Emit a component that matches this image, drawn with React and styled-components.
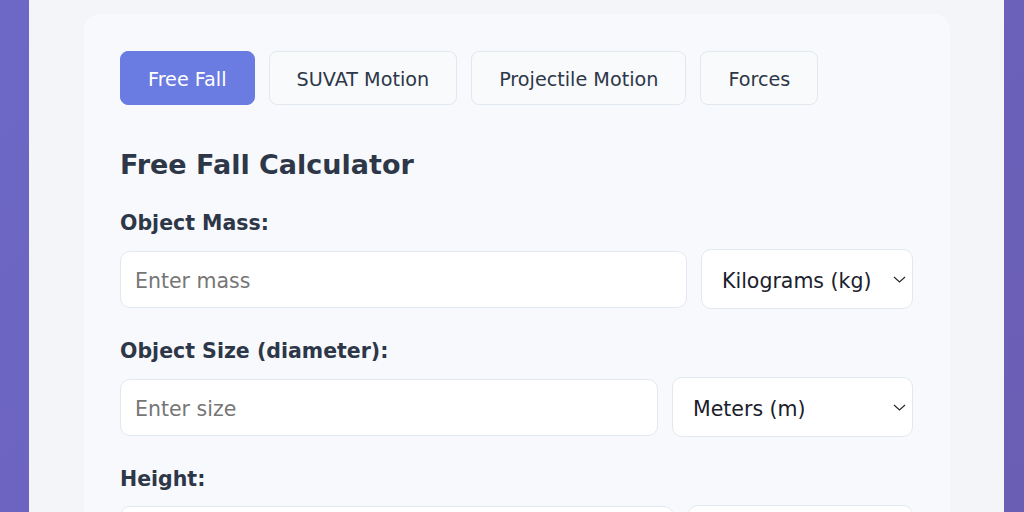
import React from 'react';
import styled, { createGlobalStyle } from 'styled-components';

const GlobalStyle = createGlobalStyle`
  html, body {
    margin: 0;
    height: 100%;
    overflow: hidden;
  }
  body {
    background: linear-gradient(135deg, #6d68c6 0%, #6a5db4 100%);
    font-family: "DejaVu Sans", Verdana, sans-serif;
    color: #2d3748;
  }
`;

const Page = styled.div`
  display: flex;
  padding: 0 20px 0 29px;
  min-height: 512px;
  box-sizing: border-box;
`;

const Container = styled.div`
  width: 975px;
  flex-shrink: 0;
  background: #f4f5f9;
  padding: 14px 54px 0 55px;
  box-sizing: border-box;
`;

const Card = styled.div`
  background: #f8f9fc;
  border-radius: 16px 16px 0 0;
  padding: 37px 37px 40px 36px;
`;

const Tabs = styled.div`
  display: flex;
  gap: 14px;
  margin-bottom: 44px;
`;

const Tab = styled.button`
  height: 54px;
  padding: 2px 27px 0;
  border-radius: 8px;
  border: 1.5px solid ${(p) => (p.active ? '#6a7ce2' : '#e2e8f0')};
  background: ${(p) => (p.active ? '#6a7ce2' : '#f9fafc')};
  color: ${(p) => (p.active ? '#ffffff' : '#2d3748')};
  font-family: inherit;
  font-size: 19.2px;
  cursor: pointer;
`;

const Title = styled.h2`
  margin: 0 0 30px;
  font-size: 27px;
  line-height: 1.2;
  font-weight: 700;
  color: #2d3748;
`;

const Group = styled.div`
  margin-bottom: 29.5px;
`;

const Label = styled.label`
  display: block;
  font-size: 20.5px;
  line-height: 1.2;
  font-weight: 700;
  color: #2d3748;
  margin-bottom: 13.5px;
`;

const Row = styled.div`
  display: flex;
  align-items: center;
  gap: 14px;
`;

const Input = styled.input`
  flex: 1;
  min-width: 0;
  height: 57px;
  box-sizing: border-box;
  padding: 3px 14px 0;
  border: 1.5px solid #e2e8f0;
  border-radius: 10px;
  background: #ffffff;
  font-family: inherit;
  font-size: 20.5px;
  color: #1a202c;
  outline: none;

  &::placeholder {
    color: #767676;
  }
`;

const SelectWrap = styled.div`
  position: relative;
  width: ${(p) => p.width}px;
  flex-shrink: 0;
`;

const Select = styled.select`
  appearance: none;
  width: 100%;
  height: 60px;
  box-sizing: border-box;
  padding: 3px 40px 0 20px;
  border: 1.5px solid #e2e8f0;
  border-radius: 10px;
  background: #ffffff;
  font-family: inherit;
  font-size: 20.5px;
  color: #1a202c;
  outline: none;
`;

const Chevron = styled.svg`
  position: absolute;
  right: 7px;
  top: 50%;
  margin-top: -3px;
  pointer-events: none;
`;

const tabs = ['Free Fall', 'SUVAT Motion', 'Projectile Motion', 'Forces'];

const fields = [
  { label: 'Object Mass:', placeholder: 'Enter mass', width: 212, units: ['Kilograms (kg)', 'Grams (g)', 'Pounds (lb)'] },
  { label: 'Object Size (diameter):', placeholder: 'Enter size', width: 241, units: ['Meters (m)', 'Centimeters (cm)', 'Feet (ft)'] },
  { label: 'Height:', placeholder: 'Enter height', width: 225, units: ['Meters (m)', 'Kilometers (km)', 'Feet (ft)'] },
];

const UnitSelect = ({ width, units }) => (
  <SelectWrap width={width}>
    <Select defaultValue={units[0]}>
      {units.map((u) => (
        <option key={u}>{u}</option>
      ))}
    </Select>
    <Chevron width="13" height="7" viewBox="0 0 13 7">
      <polyline points="1,1 6.5,6 12,1" fill="none" stroke="#2a2a2a" strokeWidth="1.2" />
    </Chevron>
  </SelectWrap>
);

const App = () => (
  <>
    <GlobalStyle />
    <Page>
      <Container>
        <Card>
          <Tabs>
            {tabs.map((t, i) => (
              <Tab key={t} active={i === 0}>
                {t}
              </Tab>
            ))}
          </Tabs>
          <Title>Free Fall Calculator</Title>
          {fields.map((f) => (
            <Group key={f.label}>
              <Label>{f.label}</Label>
              <Row>
                <Input type="number" placeholder={f.placeholder} />
                <UnitSelect width={f.width} units={f.units} />
              </Row>
            </Group>
          ))}
        </Card>
      </Container>
    </Page>
  </>
);

export default App;
